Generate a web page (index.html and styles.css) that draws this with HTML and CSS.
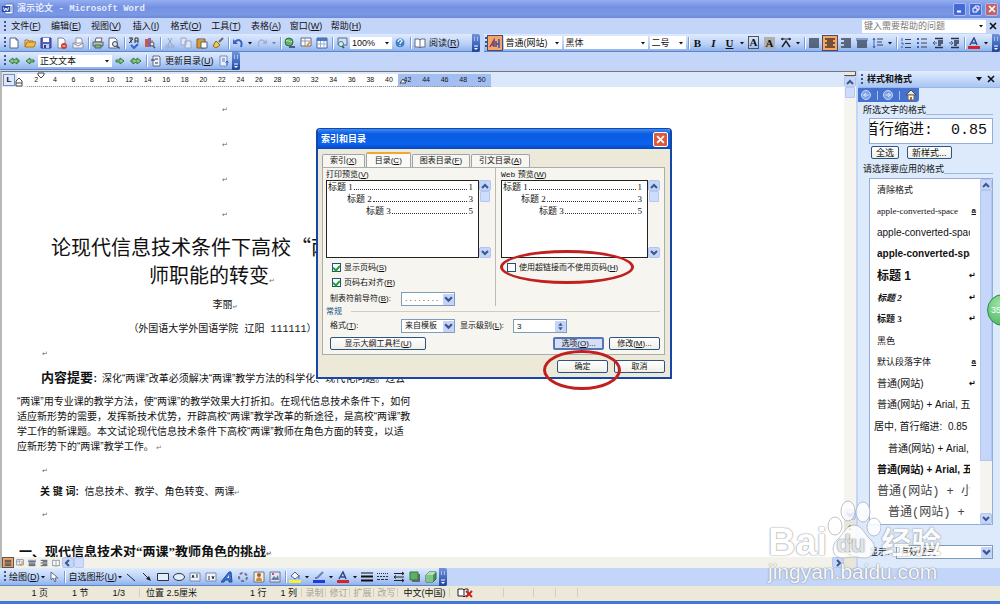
FILE: index.html
```html
<!DOCTYPE html>
<html lang="zh-CN">
<head>
<meta charset="utf-8">
<title>演示论文 - Microsoft Word</title>
<link rel="stylesheet" href="styles.css">
</head>
<body>
<svg class="defs" aria-hidden="true">
<defs>
<symbol id="new" viewBox="0 0 12 12"><path d="M2 1h6l2 2v8H2z" fill="#fff" stroke="#54688c"/><path d="M8 1v2h2" fill="none" stroke="#54688c"/></symbol>
<symbol id="open" viewBox="0 0 12 12"><path d="M1 10V3h3l1 1h4v2" fill="#f5d27a" stroke="#a87a22"/><path d="M1 10l2-5h9l-2 5z" fill="#f7b941" stroke="#a87a22"/></symbol>
<symbol id="save" viewBox="0 0 12 12"><path d="M1 1h10v10H1z" fill="#5560c0" stroke="#333b8c"/><path d="M3 1h6v4H3z" fill="#fff"/><path d="M3 7h6v4H3z" fill="#c4cbee"/><path d="M4 8h2v3H4z" fill="#333b8c"/></symbol>
<symbol id="perm" viewBox="0 0 12 12"><path d="M2 1h5l2 2v8H2z" fill="#fff" stroke="#7d8699"/><circle cx="8" cy="9" r="3" fill="#cf3a2c"/><path d="M6.500 9h3" stroke="#fff"/></symbol>
<symbol id="mail" viewBox="0 0 12 12"><path d="M4 1h5l1 2v4H4z" fill="#fff" stroke="#8a93a5"/><path d="M1 6h10v5H1z" fill="#f3f3f6" stroke="#8a93a5"/><path d="M1 6l5 3 5-3" fill="none" stroke="#8a93a5"/></symbol>
<symbol id="print" viewBox="0 0 12 12"><path d="M3 5l1-4h6L9 5z" fill="#fff" stroke="#666"/><path d="M1 5h10v4H1z" fill="#b7c0c6" stroke="#52606b"/><path d="M3 8h6v3H3z" fill="#7fbe62" stroke="#52606b"/></symbol>
<symbol id="preview" viewBox="0 0 12 12"><path d="M1 1h6l2 2v8H1z" fill="#fff" stroke="#59698a"/><circle cx="7" cy="7" r="2.500" fill="#cfe4fa" stroke="#444"/><path d="M9 9l2.500 2.500" stroke="#444" stroke-width="1.500"/></symbol>
<symbol id="spell" viewBox="0 0 12 12"><path d="M1 1h4M3 1v5M1 6l4-4M7 6V1h3v5M7 4h3" fill="none" stroke="#333"/><path d="M3 8l3 3 4-4" fill="none" stroke="#3266d0" stroke-width="2"/></symbol>
<symbol id="research" viewBox="0 0 12 12"><path d="M1 2h3v8H1z" fill="#c65a4a"/><path d="M4 1h3v9H4z" fill="#8a62b0"/><path d="M7 3h2v6H7z" fill="#d8a33c"/><circle cx="8" cy="7" r="2" fill="#dcebff" stroke="#555"/><path d="M9 9l2 2" stroke="#555" stroke-width="1.500"/></symbol>
<symbol id="cut" viewBox="0 0 12 12"><path d="M4 1l4 7M8 1L4 8" stroke="#98a2ba"/><circle cx="3.500" cy="9.500" r="1.500" fill="none" stroke="#98a2ba"/><circle cx="8.500" cy="9.500" r="1.500" fill="none" stroke="#98a2ba"/></symbol>
<symbol id="copy" viewBox="0 0 12 12"><path d="M1 1h5v7H1zM5 4h6v7H5z" fill="#dfe6f5" stroke="#9ba7c2"/></symbol>
<symbol id="paste" viewBox="0 0 12 12"><path d="M1 2h8v9H1z" fill="#d99a2e" stroke="#8a5f18"/><path d="M3 1h4v2H3z" fill="#8f98a8"/><path d="M5 5h6v6H5z" fill="#fff" stroke="#55617a"/></symbol>
<symbol id="brush" viewBox="0 0 12 12"><path d="M11 1L7 5" stroke="#666" stroke-width="2"/><path d="M4 4l4 4-4 3-3-2z" fill="#f2c94c" stroke="#8a6b1e"/></symbol>
<symbol id="undo" viewBox="0 0 12 12"><path d="M3 5c4-4 8-1 6 5" fill="none" stroke="#3b62c8" stroke-width="2"/><path d="M1 2v5h5z" fill="#3b62c8"/></symbol>
<symbol id="redo" viewBox="0 0 12 12"><path d="M9 5C5 1 1 4 3 10" fill="none" stroke="#a3b2d3" stroke-width="1.500"/><path d="M11 2v5H6z" fill="#a3b2d3"/></symbol>
<symbol id="globe" viewBox="0 0 12 12"><circle cx="5" cy="5" r="4" fill="#64b06a" stroke="#28703c"/><path d="M2 4c3-2 4 3 6 0" fill="none" stroke="#cdeed0"/><path d="M5 10h3M8 10h3" stroke="#4a5a80" stroke-width="2"/></symbol>
<symbol id="tables" viewBox="0 0 12 12"><path d="M1 1h10v8H1z" fill="#fff" stroke="#5b6a8a"/><path d="M1 4h10M5 1v8" stroke="#8b98b5"/><path d="M10 5l-4 5" stroke="#e2952c" stroke-width="2"/></symbol>
<symbol id="table" viewBox="0 0 12 12"><path d="M1 1h10v10H1z" fill="#fff" stroke="#47679f"/><path d="M1 1h10v3H1z" fill="#4b77c0"/><path d="M1 7h10M4.500 4v7M8 4v7" stroke="#9bb0d4"/></symbol>
<symbol id="map" viewBox="0 0 12 12"><path d="M2 1h9v7H2z" fill="#cfe0f7" stroke="#5b6a8a"/><circle cx="5" cy="7" r="2.500" fill="#d8f0ef" stroke="#3b7f88"/><path d="M6 9l2 2" stroke="#444" stroke-width="1.500"/></symbol>
<symbol id="help" viewBox="0 0 12 12"><circle cx="6" cy="6" r="5" fill="#3f7fc9" stroke="#c0d5ef"/><path d="M4 5c0-3 4-3 4-1 0 1-2 1-2 3M6 8v1" fill="none" stroke="#fff" stroke-width="1.200"/></symbol>
<symbol id="book" viewBox="0 0 12 12"><path d="M1 2h4l1 1 1-1h4v8H7l-1 1-1-1H1zM6 3v8" fill="#fff" stroke="#606a80"/></symbol>
<symbol id="aa" viewBox="0 0 12 12"><path d="M1 10l4-7v7M3 8h2" fill="none" stroke="#7a3f6a" stroke-width="1.500"/><path d="M7 10V4M10 11V2M7 7h3" fill="none" stroke="#3d4fa8" stroke-width="1.500"/></symbol>
<symbol id="spread" viewBox="0 0 12 12"><path d="M2 2h8M1 2l2-1v2zM11 2l-2-1v2z" stroke="#2c3a55"/><path d="M2 10l4-6 4 6" fill="none" stroke="#222" stroke-width="1.500"/></symbol>
<symbol id="just" viewBox="0 0 12 12"><path d="M1 2h10M1 4h10M1 6h10M1 8h10M1 10h10" stroke="#3a4358" stroke-width="1.300"/></symbol>
<symbol id="center" viewBox="0 0 12 12"><path d="M1 2h10M3 4h6M1 6h10M3 8h6M1 10h10" stroke="#4a3527" stroke-width="1.300"/></symbol>
<symbol id="right" viewBox="0 0 12 12"><path d="M1 2h10M4 4h7M1 6h10M4 8h7M1 10h10" stroke="#3a4358" stroke-width="1.300"/></symbol>
<symbol id="dist" viewBox="0 0 12 12"><path d="M1 4h10M1 6h10M1 8h10M1 10h10" stroke="#3a4358" stroke-width="1.300"/><path d="M2 2h8M1 1v3M11 1v3" stroke="#3a62b5"/></symbol>
<symbol id="spacing" viewBox="0 0 12 12"><path d="M2 2v8M1 3l1-2 1 2M1 9l1 2 1-2" fill="none" stroke="#3a62b5"/><path d="M5 2h6M5 5h5M5 8h6" stroke="#3a4358"/></symbol>
<symbol id="num" viewBox="0 0 12 12"><path d="M2 1v3M1 6h2v2M1 10h2" stroke="#3a62b5" fill="none"/><path d="M5 2.500h6M5 6.500h6M5 10.500h6" stroke="#3a4358"/></symbol>
<symbol id="bul" viewBox="0 0 12 12"><path d="M1 2h2M1 6h2M1 10h2" stroke="#3a62b5" stroke-width="2"/><path d="M5 2h6M5 6h6M5 10h6" stroke="#3a4358"/></symbol>
<symbol id="outd" viewBox="0 0 12 12"><path d="M3 1.500h8M6 4h5M6 6h5M6 8h3M3 10.500h8" stroke="#2c3548" stroke-width="1.300"/><path d="M5 6H1l2-2M1 6l2 2" fill="none" stroke="#3a62b5"/></symbol>
<symbol id="ind" viewBox="0 0 12 12"><path d="M3 1.500h8M6 4h5M6 6h5M6 8h3M3 10.500h8" stroke="#2c3548" stroke-width="1.300"/><path d="M1 6h4L3 4M5 6L3 8" fill="none" stroke="#3a62b5"/></symbol>
<symbol id="left2" viewBox="0 0 12 12"><path d="M1 6l4-3v2h1l3-2v2h2v2H9v2L6 7H5v2z" fill="#8fc98a" stroke="#2f7a36"/></symbol>
<symbol id="left1" viewBox="0 0 12 12"><path d="M2 6l4-3v2h4v2H6v2z" fill="#8fc98a" stroke="#2f7a36"/></symbol>
<symbol id="right1" viewBox="0 0 12 12"><path d="M10 6L6 3v2H2v2h4v2z" fill="#8fc98a" stroke="#2f7a36"/></symbol>
<symbol id="right2" viewBox="0 0 12 12"><path d="M11 6L7 3v2H6L3 3v2H1v2h2v2l3-2h1v2z" fill="#8fc98a" stroke="#2f7a36"/></symbol>
<symbol id="toc" viewBox="0 0 12 12"><path d="M3 1h6l1 1v9H3z" fill="#eef4ff" stroke="#5c6c8a"/><path d="M1 5h4M5 8h3M5 4h3" stroke="#333"/></symbol>
<symbol id="goto" viewBox="0 0 12 12"><path d="M2 1h7v10H2z" fill="#e4eeff" stroke="#7c8fb5"/><path d="M4 4h3M4 6h3" stroke="#5b7ac0"/><path d="M9 10V6M7.500 7.500L9 6l1.500 1.500" fill="none" stroke="#2a5ac0"/></symbol>
<symbol id="cursor" viewBox="0 0 12 12"><path d="M3 1v8l2-2 2 4 1-1-1-3h3z" fill="#fff" stroke="#5c6c8a"/></symbol>
<symbol id="line" viewBox="0 0 12 12"><path d="M2 3l8 7" stroke="#222"/></symbol>
<symbol id="arrow" viewBox="0 0 12 12"><path d="M2 2l5 5" stroke="#222"/><path d="M10 10L5 8l3-3z" fill="#222"/></symbol>
<symbol id="rect" viewBox="0 0 12 12"><path d="M.5 2.500h11v7H.5z" fill="#e2edfd" stroke="#333"/></symbol>
<symbol id="oval" viewBox="0 0 12 12"><ellipse cx="6" cy="6" rx="5.500" ry="3.500" fill="#e2edfd" stroke="#333"/></symbol>
<symbol id="textbox" viewBox="0 0 12 12"><path d="M1 2h10v8H1z" fill="#eef4ff" stroke="#7c8aa5"/><path d="M3 7l1-3 1 3M7 4h2M7 6h2" stroke="#333" fill="none"/></symbol>
<symbol id="wordart" viewBox="0 0 12 12"><path d="M0 11L8 1h2l1 10H8V9H4l-1 2z" fill="#3a72cc" stroke="#1f4c9b"/><path d="M6 7h2V4z" fill="#dbe8fc"/></symbol>
<symbol id="diagram" viewBox="0 0 12 12"><circle cx="6" cy="6" r="4" fill="none" stroke="#6f7690" stroke-width="2" stroke-dasharray="3 2"/></symbol>
<symbol id="clip" viewBox="0 0 12 12"><path d="M1 1h10v10H1z" fill="#f6edda" stroke="#6c7486"/><circle cx="6" cy="4" r="2" fill="#a3622e"/><path d="M3 10c0-5 6-5 6 0z" fill="#d48a2d"/></symbol>
<symbol id="pic" viewBox="0 0 12 12"><path d="M1 1h10v10H1z" fill="#dfe8f7" stroke="#6c7486"/><path d="M2 9l3-4 2 2 2-3 1 5z" fill="#647c9f"/><circle cx="4" cy="3" r="1" fill="#d14"/></symbol>
<symbol id="fill" viewBox="0 0 12 12"><path d="M2 5l4-4 4 4-4 3z" fill="#f2f4f8" stroke="#56617a"/><path d="M10 4v4" stroke="#3a62b5"/><path d="M0 9h12v3H0z" fill="#f3f03c"/></symbol>
<symbol id="pen" viewBox="0 0 12 12"><path d="M10 1L4 7" stroke="#6b82b5" stroke-width="2"/><path d="M4 7H2" stroke="#333"/><path d="M0 9h12v3H0z" fill="#2439dd"/></symbol>
<symbol id="fontc" viewBox="0 0 12 12"><path d="M2 8l4-7 3 7M4 6h4" fill="none" stroke="#2d4a86" stroke-width="1.500"/><path d="M0 9h12v3H0z" fill="#d3242c"/></symbol>
<symbol id="lw" viewBox="0 0 12 12"><path d="M0 2h12" stroke="#111"/><path d="M0 5.500h12" stroke="#111" stroke-width="2"/><path d="M0 9.500h12" stroke="#111" stroke-width="2"/></symbol>
<symbol id="dash" viewBox="0 0 12 12"><path d="M0 2.500h12" stroke="#333" stroke-dasharray="1 1"/><path d="M0 5.500h12" stroke="#333" stroke-dasharray="2 1"/><path d="M0 8.500h12" stroke="#333" stroke-dasharray="3 1"/></symbol>
<symbol id="arrows" viewBox="0 0 12 12"><path d="M1 2.500h10M1 6h10M1 9.500h10M9 1l2 1.500L9 4M3 4.500L1 6l2 1.500M9 8l2 1.500L9 11" fill="none" stroke="#222"/></symbol>
<symbol id="shadow" viewBox="0 0 12 12"><path d="M3 3h8v8H3z" fill="#667"/><path d="M1 1h8v8H1z" fill="#5fae66" stroke="#2f7a36"/></symbol>
<symbol id="cube" viewBox="0 0 12 12"><path d="M1 4l3-3h7v7l-3 3H1z" fill="#4a9355" stroke="#2f6a36"/><path d="M1 4h7v7H1z" fill="#83c488"/><path d="M1 4l3-3h7L8 4z" fill="#b5e0b6"/></symbol>
<symbol id="proof" viewBox="0 0 16 12"><path d="M1 2h5l1 1 1-1h3v7H8l-1 1-1-1H1zM7 3v7" fill="#fff" stroke="#222"/><path d="M9 4l6 6M15 4l-6 6" stroke="#c22" stroke-width="2"/></symbol>
<symbol id="word" viewBox="0 0 12 12"><path d="M3 1h8v10H3z" fill="#fff" stroke="#5b79bd"/><path d="M7 4h3M7 6h3M7 8h3" stroke="#5b79bd"/><path d="M0 3h8v6H0z" fill="#2a4fa3"/><path d="M1.500 4.500L2.500 8 4 5l1.500 3 1-3.500" fill="none" stroke="#fff"/></symbol>
<symbol id="dn" viewBox="0 0 6 6"><path d="M1 2h4L3 4.500z" fill="#111"/></symbol>
<symbol id="cdn" viewBox="0 0 8 8"><path d="M1 2l3 3 3-3" fill="none" stroke="#3d5688" stroke-width="2"/></symbol>
<symbol id="cup" viewBox="0 0 8 8"><path d="M1 6l3-3 3 3" fill="none" stroke="#3d5688" stroke-width="2"/></symbol>
<symbol id="cl" viewBox="0 0 8 8"><path d="M5 1L2 4l3 3" fill="none" stroke="#3d5688" stroke-width="2"/></symbol>
<symbol id="cr" viewBox="0 0 8 8"><path d="M3 1l3 3-3 3" fill="none" stroke="#3d5688" stroke-width="2"/></symbol>
<symbol id="x" viewBox="0 0 8 8"><path d="M1 1l6 6M7 1L1 7" stroke="currentColor" stroke-width="1.600"/></symbol>
<symbol id="over" viewBox="0 0 8 18"><path d="M2 4h1M5 4h1M2 6h1M5 6h1" stroke="#fff"/><path d="M2 12h4" stroke="#fff"/><path d="M2 14h4l-2 2z" fill="#fff"/></symbol>
<symbol id="circ" viewBox="0 0 12 12"><circle cx="6" cy="6" r="4.500" fill="#7f9fe4" stroke="#cbd9f7"/><path d="M3.500 6h5M6 4l2.500 2L6 8" fill="none" stroke="#dfe8fb"/></symbol>
<symbol id="home" viewBox="0 0 12 12"><path d="M1 6l5-5 5 5z" fill="#efe9dc" stroke="#4c4c4c"/><path d="M3 6h6v5H3z" fill="#fff8e8" stroke="#6a6a6a"/><path d="M5 8h2v3H5z" fill="#a56d34"/></symbol>
</defs>
</svg>

<div class="app">
<header class="titlebar">
  <svg class="i"><use href="#word"/></svg>
  <h1>演示论文 - Microsoft Word</h1>
  <button class="wbtn" aria-label="最小化"><svg class="c" viewBox="0 0 8 8"><path d="M1 6.500h4" stroke="#fff" stroke-width="2"/></svg></button>
  <button class="wbtn" aria-label="还原"><svg class="c" viewBox="0 0 8 8"><path d="M3 3V1h4v4H5M1 3h4v4H1z" fill="none" stroke="#fff"/></svg></button>
  <button class="wbtn red" aria-label="关闭"><svg class="c"><use href="#x"/></svg></button>
</header>

<nav class="menubar">
  <span class="grip"></span>
  <button>文件(<u>F</u>)</button><button>编辑(<u>E</u>)</button><button>视图(<u>V</u>)</button><button>插入(<u>I</u>)</button><button>格式(<u>O</u>)</button><button>工具(<u>T</u>)</button><button>表格(<u>A</u>)</button><button>窗口(<u>W</u>)</button><button>帮助(<u>H</u>)</button>
  <div class="combo ask"><input type="text" aria-label="键入需要帮助的问题" placeholder="键入需要帮助的问题"><svg class="d"><use href="#dn"/></svg></div>
  <button class="docx" aria-label="关闭文档"><svg class="c"><use href="#x"/></svg></button>
</nav>

<div class="bars">
<div class="toolbar" role="toolbar" aria-label="常用">
  <span class="grip"></span>
  <button class="tb" aria-label="新建"><svg class="i"><use href="#new"/></svg></button>
  <button class="tb" aria-label="打开"><svg class="i"><use href="#open"/></svg></button>
  <button class="tb" aria-label="保存"><svg class="i"><use href="#save"/></svg></button>
  <button class="tb" aria-label="权限"><svg class="i"><use href="#perm"/></svg></button>
  <button class="tb" aria-label="电子邮件"><svg class="i"><use href="#mail"/></svg></button>
  <i class="sep"></i>
  <button class="tb" aria-label="打印"><svg class="i"><use href="#print"/></svg></button>
  <button class="tb" aria-label="打印预览"><svg class="i"><use href="#preview"/></svg></button>
  <i class="sep"></i>
  <button class="tb" aria-label="拼写和语法"><svg class="i"><use href="#spell"/></svg></button>
  <button class="tb" aria-label="信息检索"><svg class="i"><use href="#research"/></svg></button>
  <i class="sep"></i>
  <button class="tb" aria-label="剪切"><svg class="i"><use href="#cut"/></svg></button>
  <button class="tb" aria-label="复制"><svg class="i"><use href="#copy"/></svg></button>
  <button class="tb" aria-label="粘贴"><svg class="i"><use href="#paste"/></svg></button>
  <button class="tb" aria-label="格式刷"><svg class="i"><use href="#brush"/></svg></button>
  <i class="sep"></i>
  <button class="tb" aria-label="撤消"><svg class="i"><use href="#undo"/></svg></button>
  <button class="dd" aria-label="撤消列表"><svg class="d"><use href="#dn"/></svg></button>
  <button class="tb" aria-label="恢复"><svg class="i"><use href="#redo"/></svg></button>
  <button class="dd dim" aria-label="恢复列表"><svg class="d"><use href="#dn"/></svg></button>
  <i class="sep"></i>
  <button class="tb" aria-label="超链接"><svg class="i"><use href="#globe"/></svg></button>
  <button class="tb" aria-label="表格和边框"><svg class="i"><use href="#tables"/></svg></button>
  <button class="tb" aria-label="插入表格"><svg class="i"><use href="#table"/></svg></button>
  <i class="sep"></i>
  <button class="tb" aria-label="文档结构图"><svg class="i"><use href="#map"/></svg></button>
  <div class="combo w-zoom"><select aria-label="显示比例"><option>100%</option></select><svg class="d"><use href="#dn"/></svg></div>
  <button class="tb" aria-label="帮助"><svg class="i"><use href="#help"/></svg></button>
  <i class="sep"></i>
  <button class="txt"><svg class="i"><use href="#book"/></svg><span>阅读(<u>R</u>)</span></button>
  <span class="over"><svg><use href="#over"/></svg></span>
</div>
<div class="toolbar grow" role="toolbar" aria-label="格式">
  <span class="grip"></span>
  <button class="tb on" aria-label="格式窗格"><svg class="i"><use href="#aa"/></svg></button>
  <div class="combo w-style"><select aria-label="样式"><option>普通(网站)</option></select><svg class="d"><use href="#dn"/></svg></div>
  <div class="combo w-font"><select aria-label="字体"><option>黑体</option></select><svg class="d"><use href="#dn"/></svg></div>
  <div class="combo w-size"><select aria-label="字号"><option>二号</option></select><svg class="d"><use href="#dn"/></svg></div>
  <i class="sep"></i>
  <button class="tb ser"><b>B</b></button><button class="tb ser"><b><em>I</em></b></button><button class="tb ser"><b><u>U</u></b></button>
  <button class="dd" aria-label="下划线样式"><svg class="d"><use href="#dn"/></svg></button>
  <button class="tb ser"><b class="boxed">A</b></button><button class="tb ser"><b class="shade">A</b></button>
  <button class="tb" aria-label="字符缩放"><svg class="i"><use href="#spread"/></svg></button>
  <button class="dd" aria-label="缩放列表"><svg class="d"><use href="#dn"/></svg></button>
  <i class="sep"></i>
  <button class="tb" aria-label="两端对齐"><svg class="i"><use href="#just"/></svg></button>
  <button class="tb on" aria-label="居中"><svg class="i"><use href="#center"/></svg></button>
  <button class="tb" aria-label="右对齐"><svg class="i"><use href="#right"/></svg></button>
  <button class="tb" aria-label="分散对齐"><svg class="i"><use href="#dist"/></svg></button>
  <button class="tb" aria-label="行距"><svg class="i"><use href="#spacing"/></svg></button>
  <button class="dd" aria-label="行距列表"><svg class="d"><use href="#dn"/></svg></button>
  <i class="sep"></i>
  <button class="tb" aria-label="编号"><svg class="i"><use href="#num"/></svg></button>
  <button class="tb" aria-label="项目符号"><svg class="i"><use href="#bul"/></svg></button>
  <button class="tb" aria-label="减少缩进量"><svg class="i"><use href="#outd"/></svg></button>
  <button class="tb" aria-label="增加缩进量"><svg class="i"><use href="#ind"/></svg></button>
  <i class="sep"></i>
  <button class="tb" aria-label="字体颜色"><svg class="i"><use href="#fontc"/></svg></button>
  <button class="dd" aria-label="颜色列表"><svg class="d"><use href="#dn"/></svg></button>
  <span class="over"><svg><use href="#over"/></svg></span>
</div>
</div>

<div class="bars">
<div class="toolbar" role="toolbar" aria-label="大纲">
  <span class="grip"></span>
  <button class="tb" aria-label="提升到标题 1"><svg class="i"><use href="#left2"/></svg></button>
  <button class="tb" aria-label="提升"><svg class="i"><use href="#left1"/></svg></button>
  <div class="combo w-level"><select aria-label="大纲级别"><option>正文文本</option></select><svg class="d"><use href="#dn"/></svg></div>
  <button class="tb" aria-label="降低"><svg class="i"><use href="#right1"/></svg></button>
  <button class="tb" aria-label="降为正文"><svg class="i"><use href="#right2"/></svg></button>
  <i class="sep"></i>
  <button class="txt"><svg class="i"><use href="#toc"/></svg><span>更新目录(<u>U</u>)</span></button>
  <button class="tb" aria-label="转到目录"><svg class="i"><use href="#goto"/></svg></button>
  <span class="over"><svg><use href="#over"/></svg></span>
</div>
</div>

<div class="work">
<main class="docwin">
  <div class="docmain">
    <div class="ruler">
      <span class="tabsel">L</span>
      <div class="scale">
        <span>2</span><span>4</span><span>6</span><span>8</span><span>10</span><span>12</span><span>14</span><span>16</span><span>18</span><span>20</span><span>22</span><span>24</span><span>26</span><span>28</span><span>30</span><span>32</span><span>34</span><span>36</span><span>38</span><span>40</span><span class="m">42</span><span class="m">44</span><span class="m">46</span><span class="m">48</span><span class="m">50</span>
      </div>
      <svg class="mk left" viewBox="0 0 8 10"><path d="M1 4l3-3 3 3v5H1zM1 6h6" fill="#fff" stroke="#444"/></svg>
      <svg class="mk first" viewBox="0 0 8 10"><path d="M1 1h6v2L4 6 1 3z" fill="#fff" stroke="#444"/></svg>
      <svg class="mk rgt" viewBox="0 0 8 10"><path d="M1 8l3-4 3 4z" fill="#fff" stroke="#444"/></svg>
    </div>
    <article class="page">
      <p class="blank">↵</p><p class="blank">↵</p><p class="blank">↵</p><p class="blank">↵</p>
      <h2>论现代信息技术条件下高校“两课”教<br>师职能的转变<small>↵</small></h2>
      <p class="by">李丽<small>↵</small></p>
      <p class="by">（外国语大学外国语学院 辽阳 111111）<small>↵</small></p>
      <p class="mark">↵</p>
      <p class="lead"><b>内容提要</b><b class="colon">：</b>深化“两课”改革必须解决“两课”教学方法的科学化、现代化问题。过去</p>
      <p class="text">“两课”用专业课的教学方法，使“两课”的教学效果大打折扣。在现代信息技术条件下，如何<br>适应新形势的需要，发挥新技术优势，开辟高校“两课”教学改革的新途径，是高校“两课”教<br>学工作的新课题。本文试论现代信息技术条件下高校“两课”教师在角色方面的转变，以适<br>应新形势下的“两课”教学工作。 <small>↵</small></p>
      <p class="mark">↵</p>
      <p class="keys"><b>关 键 词:</b> &nbsp;信息技术、教学、角色转变、两课<small>↵</small></p>
      <p class="mark">↵</p>
      <h3>一、现代信息技术对“两课”教师角色的挑战<small>↵</small></h3>
    </article>
    <div class="hbar">
      <button class="vw on" aria-label="普通视图"><svg class="c"><use href="#just"/></svg></button>
      <button class="vw" aria-label="Web 版式"><svg class="c"><use href="#tables"/></svg></button>
      <button class="vw" aria-label="页面视图"><svg class="c"><use href="#dist"/></svg></button>
      <button class="vw" aria-label="大纲视图"><svg class="c"><use href="#right"/></svg></button>
      <button class="vw" aria-label="阅读版式"><svg class="c"><use href="#book"/></svg></button>
      <button class="sb" aria-label="向左"><svg class="c"><use href="#cl"/></svg></button>
      <span class="thumb"></span>
      <button class="sb end" aria-label="向右"><svg class="c"><use href="#cr"/></svg></button>
    </div>
  </div>
  <div class="vbar">
    <span class="split"></span>
    <button class="sb" aria-label="向上"><svg class="c"><use href="#cup"/></svg></button>
    <span class="thumb"></span>
    <button class="sb bottom" aria-label="向下"><svg class="c"><use href="#cdn"/></svg></button>
    <div class="browse">
      <svg class="c" viewBox="0 0 8 8"><path d="M2 4l2-2 2 2zM2 7l2-2 2 2z" fill="#333"/></svg>
      <svg class="c" viewBox="0 0 8 8"><circle cx="4" cy="4" r="2.500" fill="none" stroke="#333"/></svg>
      <svg class="c" viewBox="0 0 8 8"><path d="M2 1l2 2 2-2zM2 4l2 2 2-2z" fill="#333"/></svg>
    </div>
  </div>
</main>

<aside class="pane">
  <div class="phead"><span class="grip"></span><h2>样式和格式</h2><button aria-label="窗格菜单"><svg class="c" viewBox="0 0 8 8"><path d="M1 2h6L4 6z" fill="#111"/></svg></button><button aria-label="关闭窗格"><svg class="c"><use href="#x"/></svg></button></div>
  <div class="pnav"><button aria-label="后退"><svg class="i flip"><use href="#circ"/></svg></button><i></i><button aria-label="前进"><svg class="i"><use href="#circ"/></svg></button><i></i><button aria-label="主页"><svg class="i"><use href="#home"/></svg></button></div>
  <div class="pbody">
    <h3>所选文字的格式</h3>
    <div class="current"><span>首行缩进:&nbsp; 0.85</span></div>
    <div class="pbtns"><button class="btn">全选</button><button class="btn">新样式...</button></div>
    <h3>请选择要应用的格式</h3>
    <div class="listbox">
      <ul>
        <li><span>清除格式</span></li>
        <li><span class="s-serif">apple-converted-space</span><b class="k"><u>a</u></b></li>
        <li><span class="s-sans">apple-converted-space</span></li>
        <li><span class="s-sans"><b>apple-converted-space</b></span></li>
        <li><span class="s-h1">标题 1</span><b class="k">↵</b></li>
        <li><span class="s-h2">标题 2</span><b class="k">↵</b></li>
        <li><span class="s-h3">标题 3</span><b class="k">↵</b></li>
        <li><span>黑色</span></li>
        <li><span>默认段落字体</span><b class="k"><u>a</u></b></li>
        <li><span class="s-ten">普通(网站)</span><b class="k">↵</b></li>
        <li><span class="s-ten">普通(网站) + Arial, 五号</span></li>
        <li class="out"><span class="s-ten">居中, 首行缩进:&nbsp; 0.85 厘米</span></li>
        <li class="in"><span class="s-ten">普通(网站) + Arial, 五号</span></li>
        <li><span class="s-ten"><b>普通(网站) + Arial, 五号</b></span></li>
        <li><span class="s-big">普通(网站) + 小四</span></li>
        <li class="in"><span class="s-big">普通(网站) + 小四</span></li>
      </ul>
      <div class="lbar"><button class="sb" aria-label="向上"><svg class="c"><use href="#cup"/></svg></button><span class="lthumb"></span><button class="sb bottom" aria-label="向下"><svg class="c"><use href="#cdn"/></svg></button></div>
    </div>
    <div class="show"><label for="show">显示:</label><div class="xsel"><select id="show"><option>有效格式</option></select><svg class="a"><use href="#cdn"/></svg></div></div>
  </div>
</aside>
</div>

<div class="bars">
<div class="toolbar draw" role="toolbar" aria-label="绘图">
  <span class="grip"></span>
  <button class="txt"><span>绘图(<u>D</u>)</span><svg class="d"><use href="#dn"/></svg></button>
  <button class="tb" aria-label="选择对象"><svg class="i"><use href="#cursor"/></svg></button>
  <i class="sep"></i>
  <button class="txt"><span>自选图形(<u>U</u>)</span><svg class="d"><use href="#dn"/></svg></button>
  <button class="tb" aria-label="直线"><svg class="i"><use href="#line"/></svg></button>
  <button class="tb" aria-label="箭头"><svg class="i"><use href="#arrow"/></svg></button>
  <button class="tb" aria-label="矩形"><svg class="i"><use href="#rect"/></svg></button>
  <button class="tb" aria-label="椭圆"><svg class="i"><use href="#oval"/></svg></button>
  <button class="tb" aria-label="文本框"><svg class="i"><use href="#textbox"/></svg></button>
  <button class="tb" aria-label="竖排文本框"><svg class="i flip"><use href="#textbox"/></svg></button>
  <button class="tb" aria-label="艺术字"><svg class="i"><use href="#wordart"/></svg></button>
  <button class="tb" aria-label="图示"><svg class="i"><use href="#diagram"/></svg></button>
  <button class="tb" aria-label="剪贴画"><svg class="i"><use href="#clip"/></svg></button>
  <button class="tb" aria-label="图片"><svg class="i"><use href="#pic"/></svg></button>
  <i class="sep"></i>
  <button class="tb" aria-label="填充颜色"><svg class="i"><use href="#fill"/></svg></button>
  <button class="dd" aria-label="填充列表"><svg class="d"><use href="#dn"/></svg></button>
  <button class="tb" aria-label="线条颜色"><svg class="i"><use href="#pen"/></svg></button>
  <button class="dd" aria-label="线条列表"><svg class="d"><use href="#dn"/></svg></button>
  <button class="tb" aria-label="字体颜色"><svg class="i"><use href="#fontc"/></svg></button>
  <button class="dd" aria-label="字体颜色列表"><svg class="d"><use href="#dn"/></svg></button>
  <button class="tb" aria-label="线型"><svg class="i"><use href="#lw"/></svg></button>
  <button class="tb" aria-label="虚线线型"><svg class="i"><use href="#dash"/></svg></button>
  <button class="tb" aria-label="箭头样式"><svg class="i"><use href="#arrows"/></svg></button>
  <button class="tb" aria-label="阴影样式"><svg class="i"><use href="#shadow"/></svg></button>
  <button class="tb" aria-label="三维效果样式"><svg class="i"><use href="#cube"/></svg></button>
  <span class="over"><svg><use href="#over"/></svg></span>
</div>
</div>

<footer class="status">
  <div class="cell c1"><span>1 页</span><span>1 节</span><span>1/3</span></div>
  <div class="cell c2"><span>位置 2.5厘米</span><span>1 行</span><span>1 列</span></div>
  <div class="cell off">录制</div><div class="cell off">修订</div><div class="cell off">扩展</div><div class="cell off">改写</div>
  <div class="cell lang">中文(中国)</div>
  <div class="cell prf"><svg viewBox="0 0 16 12"><use href="#proof"/></svg></div>
  <div class="cell e1"></div><div class="cell e2"></div><div class="cell e2"></div>
</footer>
</div>

<section class="dialog" role="dialog" aria-label="索引和目录">
  <div class="dhead"><h2>索引和目录</h2><button aria-label="关闭"><svg viewBox="0 0 8 8"><use href="#x"/></svg></button></div>
  <div class="dbody">
    <div class="tabs"><button>索引(<u>X</u>)</button><button class="cur">目录(<u>C</u>)</button><button>图表目录(<u>F</u>)</button><button>引文目录(<u>A</u>)</button></div>
    <div class="panel">
      <div class="cols">
        <div class="colA">
          <div class="lbl">打印预览(<u>V</u>)</div>
          <div class="pv">
            <div class="sheet"><p>标题 1<i></i>1</p><p class="l2">标题 2<i></i>3</p><p class="l3">标题 3<i></i>5</p></div>
            <div class="dbar"><button class="sb" aria-label="向上"><svg class="c"><use href="#cup"/></svg></button><span class="thumb"></span><button class="sb bottom" aria-label="向下"><svg class="c"><use href="#cdn"/></svg></button></div>
          </div>
          <label class="chk first"><input type="checkbox" checked>显示页码(<u>S</u>)</label>
          <label class="chk"><input type="checkbox" checked>页码右对齐(<u>R</u>)</label>
          <div class="row"><label for="leader" class="rl">制表符前导符(<u>B</u>):</label><div class="xsel"><select id="leader"><option>. . . . . . . .</option></select><svg class="a"><use href="#cdn"/></svg></div></div>
        </div>
        <div class="colB">
          <div class="lbl"><tt>Web</tt> 预览(<u>W</u>)</div>
          <div class="pv">
            <div class="sheet"><p>标题 1<i></i>1</p><p class="l2">标题 2<i></i>3</p><p class="l3">标题 3<i></i>5</p></div>
            <div class="dbar"><button class="sb" aria-label="向上"><svg class="c"><use href="#cup"/></svg></button><span class="thumb"></span><button class="sb bottom" aria-label="向下"><svg class="c"><use href="#cdn"/></svg></button></div>
          </div>
          <label class="chk first"><input type="checkbox">使用超链接而不使用页码(<u>H</u>)</label>
        </div>
      </div>
      <div class="legend">常规</div>
      <div class="row"><label for="fmt" class="rl">格式(<u>T</u>):</label><div class="xsel"><select id="fmt"><option>来自模板</option></select><svg class="a"><use href="#cdn"/></svg></div><label for="lv" class="lv">显示级别(<u>L</u>):</label><div class="xsel spin"><input id="lv" type="text" value="3"><svg class="a" viewBox="0 0 8 12"><path d="M1 5l3-4 3 4zM1 7l3 4 3-4z" fill="#3d5688"/></svg></div></div>
      <div class="acts"><button class="btn wide">显示大纲工具栏(<u>U</u>)</button><button class="btn def">选项(<u>O</u>)...</button><button class="btn">修改(<u>M</u>)...</button></div>
    </div>
    <div class="oks"><button class="btn">确定</button><button class="btn">取消</button></div>
  </div>
  <span class="ring r1"></span><span class="ring r2"></span>
</section>

<div class="ball">35</div>

<div class="wm" aria-hidden="true">
  <div class="wm1"><span>Bai</span><svg viewBox="0 0 54 60"><g fill="#fff" stroke="#b3b8be"><ellipse cx="8" cy="26" rx="7" ry="9"/><ellipse cx="21" cy="11" rx="7" ry="10"/><ellipse cx="36" cy="12" rx="7" ry="10"/><ellipse cx="47" cy="27" rx="7" ry="9"/><path d="M27 25c8 0 11 10 17 15 7 7 3 18-6 18-5 0-7-1-11-1s-7 1-12 1c-9 0-12-11-5-18 6-5 9-15 17-15z"/></g></svg><b>du</b><span class="cn">经验</span></div>
  <div class="wm2">jingyan.baidu.com</div>
</div>
</body>
</html>
```
FILE: styles.css
```css
* { box-sizing: border-box; margin: 0; padding: 0; }
body { height: 100vh; overflow: hidden; position: relative; font: 9px/12px "Liberation Sans", "Noto Sans CJK SC", sans-serif; color: #111; background: #c3d5f8; }
button, input, select { font: inherit; color: inherit; border: 0; background: none; border-radius: 0; }
button { display: flex; align-items: center; justify-content: center; white-space: nowrap; }
select, input[type=text] { appearance: none; min-width: 0; flex: 1; height: 100%; outline: 0; }
svg { display: block; flex: none; }
ul { list-style: none; }
.defs { position: absolute; width: 0; height: 0; }
.i { width: 12px; height: 12px; }
.c { width: 8px; height: 8px; }
.d { width: 6px; height: 6px; }
.a { width: 11px; height: 11px; background: #c3d3fa; border-radius: 1px; padding: 1px; }

.app { height: 100vh; display: flex; flex-direction: column; }

.titlebar { height: 18px; flex: none; display: flex; align-items: center; gap: 3px; padding: 0 2px; background: linear-gradient(#94aef0, #7491e2 40%, #7b98e6 80%, #6c88d8); color: #e6edfd; }
.titlebar h1 { flex: 1; font: bold 9px/14px "Liberation Mono", "Noto Sans CJK SC", monospace; }
.wbtn { width: 13px; height: 13px; border: 1px solid #a9bdf2; border-radius: 2px; background: #4468d6; color: #fff; }
.wbtn.red { background: #c0636b; }

.menubar { height: 16px; flex: none; display: flex; align-items: center; padding-left: 4px; background: #c3d5f8; }
.grip { width: 2px; height: 11px; flex: none; background: repeating-linear-gradient(#3b5692 0 2px, transparent 2px 4px); }
.menubar > button { width: 40px; }
.menubar .ask { width: 124px; height: 13px; margin-left: auto; }
.menubar .docx { width: 14px; }
.ask input::placeholder { color: #777; opacity: 1; }

.bars { height: 18px; flex: none; display: flex; gap: 4px; background: #c3d5f8; }
.toolbar { height: 18px; display: flex; align-items: center; padding-left: 4px; background: linear-gradient(#dfebfe, #b8d0f7 60%, #8fb2ec); border-bottom: 1px solid #5f85c9; border-radius: 0 2px 2px 0; }
.toolbar.grow { flex: 1; padding-left: 1px; }
.tb { width: 16px; height: 16px; flex: none; }
.tb.on { border: 1px solid #4b4b6f; background: #f7a765; }
.dd { width: 8px; height: 16px; flex: none; }
.dim { opacity: .4; }
.sep { width: 4px; height: 12px; flex: none; border-right: 1px solid #fff; background: linear-gradient(90deg, transparent 2px, #7a9ad4 2px); }
.over { width: 8px; height: 18px; flex: none; margin-left: auto; background: linear-gradient(#6f95de, #1f459c); border-radius: 0 2px 2px 0; }
.over svg { width: 8px; height: 18px; }
.txt { gap: 3px; height: 16px; padding: 0 2px; flex: none; }
.txt:has(+ .over) { padding-right: 12px; }
.combo { display: flex; align-items: center; height: 12px; background: #fff; flex: none; padding: 0 2px; }
.combo + .combo { margin-left: 2px; }
.w-zoom { width: 42px; }
.w-style { width: 58px; }
.w-font { width: 84px; }
.w-size { width: 36px; }
.w-level { width: 74px; }
.tb + .w-style { margin-left: 1px; }
.grow .combo { height: 13px; }
.ser { font: 11px/14px "Liberation Serif", serif; }
.boxed { border: 1px solid #555; padding: 0 1px; line-height: 11px; }
.shade { background: #b0b0b0; padding: 0 2px; line-height: 12px; }

.work { flex: 1; min-height: 0; display: flex; gap: 2px; margin-top: 1px; background: #c3d5f8; }
.docwin { flex: 1; min-width: 0; display: flex; border-top: 1px solid #777; border-left: 2px solid #b9b9b4; }
.docmain { flex: 1; min-width: 0; display: flex; flex-direction: column; background: #fff; }
.ruler { position: relative; height: 15px; flex: none; display: flex; align-items: center; background: #dbe8fc; padding-left: 1px; }
.tabsel { width: 12px; height: 12px; border: 1px solid #7c8fb8; font: bold 8px/10px "Liberation Sans", sans-serif; text-align: center; }
.scale { width: 474px; margin-left: 2px; height: 12px; padding-left: 10px; display: grid; grid-template-columns: repeat(25, 1fr); background: #fff; font-size: 7px; text-align: center; }
.scale span { border-bottom: 1px dotted #999; }
.scale .m { background: #a3bff2; }
.mk { position: absolute; width: 8px; height: 10px; }
.mk.left { left: 13px; bottom: 0; }
.mk.first { left: 35px; top: 0; }
.mk.rgt { left: 397px; bottom: 2px; }

.page { flex: 1; min-height: 0; overflow: hidden; padding: 5px 24px 0 15px; width: 425px; white-space: nowrap; font: 10px/15px "Liberation Sans", "Noto Sans CJK SC", sans-serif; }
.page small { font-size: 7px; color: #777; }
.blank, .mark { font-size: 7px; color: #666; }
.blank { text-align: center; text-indent: 29px; height: 35px; line-height: 35px; }
.page h2 { font: 20px/28px "Noto Sans CJK SC", sans-serif; text-align: center; text-indent: 18px; padding-left: 4px; margin-top: 1px; }
.by { text-align: center; text-indent: 29px; line-height: 23px; font-family: "Liberation Mono", "Noto Sans CJK SC", monospace; }
.mark { padding-left: 25px; height: 23px; line-height: 23px; }
.by + .mark { height: 21px; }
.lead { padding-left: 24px; line-height: 30px; }
.lead b { font-size: 13px; }
.lead .colon { font-size: 9px; }
.text { line-height: 15px; margin-bottom: 4px; }
.keys { padding-left: 23px; line-height: 20px; }
.page h3 { font: bold 13px/26px "Liberation Serif", "Noto Sans CJK SC", serif; padding: 13px 0 0 2px; }

.hbar { height: 11px; flex: none; display: flex; background: #f3f2ea; }
.vw { width: 12px; }
.vw.on { background: #f7a765; border: 1px solid #555; }
.sb { width: 12px; height: 11px; flex: none; background: #c6d6fb; border: 1px solid #b2c5ee; border-radius: 2px; }
.sb.end { margin-left: auto; }
.sb.bottom { margin-top: auto; }
.thumb { width: 10px; height: 11px; background: #cddcfc; border: 1px solid #b7c8ee; border-radius: 1px; align-self: center; }
.vbar { width: 12px; flex: none; display: flex; flex-direction: column; background: #f5f4ee; }
.split { height: 4px; background: #ece9d8; border-bottom: 1px solid #555; border-right: 1px solid #555; }
.browse { height: 48px; padding: 3px 0 10px; display: flex; flex-direction: column; justify-content: space-between; align-items: center; background: #e8e6d9; }

.pane { width: 142px; flex: none; display: flex; flex-direction: column; background: #dceafb; }
.phead { height: 17px; display: flex; align-items: center; gap: 4px; padding: 0 5px 0 3px; background: linear-gradient(#e3eefe, #a9c5f4); border-bottom: 1px solid #9ab5e6; }
.phead h2 { flex: 1; font-size: 9px; }
.pnav { width: 61px; height: 14px; display: flex; align-items: center; justify-content: space-around; background: #4672cf; border-radius: 0 0 3px 0; }
.pnav i { width: 1px; height: 9px; background: #a9c1f2; }
.flip { transform: rotate(180deg); }
.pbody { flex: 1; min-height: 0; display: flex; flex-direction: column; padding: 2px 7px 9px 5px; }
.pbody h3 { font-size: 9px; font-weight: normal; line-height: 13px; display: flex; align-items: center; }
.pbody h3::after { content: ""; flex: 1; height: 1px; margin-top: 8px; background: #9db7e2; }
.current { margin: 1px 0 0 6px; height: 26px; border: 1px solid #93aedb; background: #fff; padding: 0 5px 0 2px; overflow: hidden; display: flex; justify-content: flex-end; align-items: center; white-space: nowrap; font: 15px/22px "Liberation Mono", "Noto Sans CJK SC", monospace; }
.current span { flex: none; }
.pbtns { display: flex; gap: 8px; padding: 2px 0 4px 8px; }
.btn { height: 13px; min-width: 27px; padding: 0 4px; border: 1px solid #2c5381; border-radius: 2px; background: linear-gradient(#fff, #f0efe8); }
.listbox { flex: 1; min-height: 0; margin: 2px 0 0 6px; border: 1px solid #93aedb; background: #fff; display: flex; }
.listbox ul { flex: 1; min-width: 0; display: flex; flex-direction: column; padding: 0 4px 0 7px; }
.listbox li { flex: 1; min-height: 0; display: flex; align-items: center; white-space: nowrap; }
.listbox li span { width: 93px; overflow: hidden; }
.listbox .in span { padding-left: 11px; }
.listbox .out { margin-left: -3px; }
.listbox .out span { width: 96px; }
.k { margin-left: auto; font-size: 8px; }
.s-serif { font: 9px/12px "Liberation Serif", serif; }
.s-sans, .s-ten { font-size: 10px; }
.s-h1 { font: bold 12px/18px "Liberation Sans", "Noto Sans CJK SC", sans-serif; }
.s-h2 { font: italic bold 9px/12px "Liberation Serif", "Noto Sans CJK SC", serif; }
.s-h3 { font: bold 9px/12px "Liberation Serif", "Noto Sans CJK SC", serif; }
.s-big { font: 12px/18px "Liberation Mono", "Noto Sans CJK SC", monospace; color: #444; }
.lbar { width: 12px; display: flex; flex-direction: column; background: #f5f4ee; }
.lthumb { height: 271px; background: #c6d6fb; border: 1px solid #b2c5ee; }
.show { display: flex; justify-content: space-between; align-items: center; padding: 20px 0 0 6px; }
.show .xsel { width: 97px; }
.xsel { display: flex; align-items: center; height: 14px; width: 54px; background: #fff; border: 1px solid #7f9db9; padding-left: 3px; }

.draw .txt { padding: 0 0 0 3px; gap: 0; }
.status { height: 18px; flex: none; display: flex; gap: 2px; padding: 2px 0 4px 2px; background: #ece9d8; border-bottom: 3px solid #3f78d8; }
.cell { display: flex; align-items: center; justify-content: center; width: 22px; border-right: 1px solid #d3cfbd; white-space: nowrap; }
.c1 { width: 138px; justify-content: flex-end; gap: 24px; padding-right: 14px; }
.c2 { width: 160px; padding: 0 4px; justify-content: space-between; }
.c2 span:first-child { flex: 1; }
.c2 span + span { padding-left: 14px; }
.off { color: #aaa696; }
.lang { width: 50px; }
.prf { width: 52px; justify-content: flex-start; padding-left: 5px; }
.prf svg { width: 16px; height: 12px; }
.e1 { width: 28px; }
.e2 { width: 20px; }

.dialog { position: absolute; left: 316px; top: 128px; width: 356px; border: 2px solid #1546a8; border-top-width: 1px; border-radius: 4px 4px 0 0; background: #ece9d8; font-size: 8px; line-height: 12px; }
.dhead { height: 20px; display: flex; align-items: center; justify-content: space-between; padding: 0 2px 0 3px; background: linear-gradient(#3b8cf5, #0a5be0 25%, #0a62ee 75%, #0647be); color: #fff; border-radius: 3px 3px 0 0; }
.dhead h2 { font-size: 9px; }
.dhead button { width: 15px; height: 15px; border: 1px solid #fff; border-radius: 2px; background: #dd5a3c; }
.dhead svg { width: 9px; height: 9px; }
.dbody { padding: 3px 5px 4px 4px; }
.tabs { display: flex; align-items: flex-end; height: 15px; gap: 1px; }
.tabs button { height: 13px; padding: 0 7px; border: 1px solid #9aa5ad; border-bottom: 0; border-radius: 2px 2px 0 0; background: #f7f6f1; }
.tabs .cur { height: 15px; padding: 0 8px; border-top: 2px solid #f0a63c; background: #fbfaf7; }
.panel { border: 1px solid #a9adae; background: #f6f5f0; padding: 0 4px 4px 3px; }
.cols { display: flex; }
.colA { width: 170px; border-right: 1px solid #bdbbb0; }
.colB { flex: 1; padding-left: 5px; }
.lbl { height: 12px; line-height: 13px; }
.lbl tt { font: 8px/12px "Liberation Mono", monospace; }
.pv { display: flex; height: 78px; margin-right: 4px; }
.colB .pv { margin-right: 0; }
.sheet { flex: 1; border: 1px solid #222; background: #fff; padding: 0 5px 0 1px; font: 9px/12px "Liberation Serif", "Noto Sans CJK SC", serif; }
.sheet p { display: flex; }
.sheet i { flex: 1; border-bottom: 1px dotted #333; margin: 0 2px 3px 1px; }
.l2 { padding-left: 19px; }
.l3 { padding-left: 38px; }
.colB .l2 { padding-left: 18px; }
.colB .l3 { padding-left: 36px; }
.dbar { width: 12px; display: flex; flex-direction: column; background: #f5f4ee; }
.chk { display: flex; align-items: center; height: 15px; padding-left: 6px; white-space: nowrap; }
.chk.first { margin-top: 2px; }
.chk input { appearance: none; width: 9px; height: 9px; margin-right: 3px; border: 1px solid #1c5180; background: #fff; display: grid; place-items: center; }
.chk input:checked::after { content: ""; width: 3px; height: 5px; margin-bottom: 2px; border: solid #21a121; border-width: 0 2px 2px 0; transform: rotate(40deg); }
.row { display: flex; align-items: center; padding: 2px 0 0 4px; }
.rl { width: 71px; white-space: nowrap; }
.lv { width: 58px; padding-left: 5px; white-space: nowrap; }
.legend { display: flex; align-items: center; gap: 9px; color: #17507c; height: 11px; }
.legend::after { content: ""; flex: 1; height: 1px; background: #cfccc0; }
.acts { display: flex; gap: 5px; padding: 4px 0 0 4px; }
.acts .btn, .oks .btn { width: 51px; }
.acts .wide { width: 96px; margin-right: auto; }
.acts .def { background: #d5def5; border: 2px solid #5674b8; }
.oks { display: flex; justify-content: flex-end; gap: 6px; padding-top: 5px; }
.ring { position: absolute; border: 3px solid #c1201f; border-radius: 50%; pointer-events: none; }
.r1 { left: 182px; top: 121px; width: 134px; height: 34px; }
.r2 { left: 225px; top: 221px; width: 78px; height: 40px; }

.ball { position: absolute; right: -19px; top: 294px; width: 32px; height: 32px; border-radius: 50%; border: 1px solid #2f8a44; background: radial-gradient(circle at 40% 30%, #9be3a3, #3fae57); color: #fff; font-size: 9px; line-height: 30px; padding-left: 3px; }

.wm { position: absolute; right: 52px; bottom: 20px; width: 180px; opacity: .85; color: #fff; text-shadow: 0 0 1px #777, 0 0 2px #999; pointer-events: none; }
.wm1 { display: flex; align-items: flex-end; font: bold 38px/36px "Liberation Sans", sans-serif; }
.wm1 svg { width: 54px; height: 60px; }
.wm1 b { width: 36px; margin-left: -45px; margin-right: 9px; font-size: 24px; line-height: 32px; color: #dfe3e8; }
.wm1 .cn { font: bold 30px/40px "Noto Sans CJK SC", sans-serif; }
.wm2 { font: 21px/24px "Liberation Sans", sans-serif; }
```
